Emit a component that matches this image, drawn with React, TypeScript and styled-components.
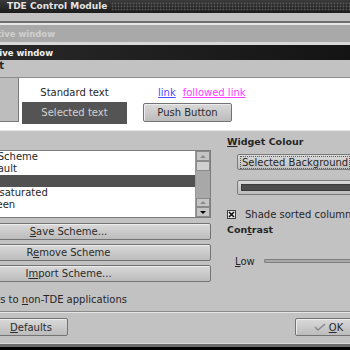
import React from 'react';
import styled, { createGlobalStyle } from 'styled-components';

const GlobalStyle = createGlobalStyle`
  html, body { margin: 0; padding: 0; background: #000; }
  body {
    font-family: 'DejaVu Sans', 'Liberation Sans', sans-serif;
    font-size: 10px;
    color: #262626;
  }
`;

const Screen = styled.div`
  width: 350px;
  height: 350px;
  overflow: hidden;
  background: #c2c2c2;
  display: flex;
  flex-direction: column;
`;

const TitleBar = styled.div`
  height: 13px;
  flex: none;
  display: flex;
  align-items: center;
  background: linear-gradient(#3a3a3a, #1c1c1c);
`;

const TitleText = styled.span`
  padding-left: 7px;
  color: #e4e4e4;
  font-weight: bold;
  font-size: 9px;
  line-height: 13px;
  white-space: nowrap;
`;

const TitleDots = styled.div`
  flex: 1;
  align-self: stretch;
  margin: 2px 0 2px 4px;
  background-image: radial-gradient(circle, #5c5c5c 0.8px, transparent 1.1px);
  background-size: 3px 3px;
`;

const DecoPreview = styled.div`
  margin-top: 8px;
  border-top: 2px solid #6f6f6f;
`;

const WinBar = styled.div<{ $active?: boolean }>`
  height: ${(p) => (p.$active ? 15 : 17)}px;
  border-top: ${(p) => (p.$active ? '3px solid #d8d8d8' : '2px solid #e6e6e6')};
  background: ${(p) => (p.$active ? 'linear-gradient(90deg, #282828, #141414)' : '#a9a9a9')};
  color: ${(p) => (p.$active ? '#f2f2f2' : '#d0d0d0')};
  font-weight: bold;
  font-size: 8.5px;
  display: flex;
  align-items: center;
`;

// box whose right edge sits where the visible text ends; overflow runs off to the left
const EndAt = styled.div<{ $end: number }>`
  width: ${(p) => p.$end}px;
  flex: none;
  display: flex;
  justify-content: flex-end;
  white-space: nowrap;
`;

const TabRow = styled.div`
  height: 17px;
  display: flex;
  align-items: flex-start;
  font-weight: bold;
  line-height: 12px;
`;

const PreviewBox = styled.div`
  height: 52px;
  display: flex;
  border-top: 1px solid #8c8c8c;
  border-bottom: 1px solid #e6e6e6;
  background: #fff;
`;

const FrameStub = styled.div`
  width: 18px;
  height: 43px;
  flex: none;
  background: #bdbdbd;
  border-right: 1px solid #7a7a7a;
  border-bottom: 1px solid #7a7a7a;
`;

const Canvas = styled.div`
  flex: 1;
  display: flex;
  gap: 16px;
  padding: 9px 0 0 3px;
`;

const SampleCol = styled.div<{ $width: number }>`
  width: ${(p) => p.$width}px;
  display: flex;
  flex-direction: column;
  align-items: center;
`;

const SampleLine = styled.div<{ $indent?: number }>`
  height: 12px;
  line-height: 12px;
  align-self: ${(p) => (p.$indent !== undefined ? 'flex-start' : 'center')};
  padding-left: ${(p) => p.$indent ?? 0}px;
  white-space: nowrap;
  display: flex;
  gap: 7px;
`;

const SelectedSample = styled.div`
  margin-top: 3px;
  width: 105px;
  height: 22px;
  line-height: 22px;
  text-align: center;
  background: #545454;
  color: #d2d2d2;
`;

const Link = styled.span<{ $visited?: boolean }>`
  color: ${(p) => (p.$visited ? '#ff3cff' : '#4a4aff')};
  text-decoration: underline;
`;

const Button = styled.button<{ $width?: number; $height?: number }>`
  font: inherit;
  color: #2a2a2a;
  width: ${(p) => (p.$width ? `${p.$width}px` : 'auto')};
  height: ${(p) => p.$height ?? 17}px;
  padding: 0;
  flex: none;
  box-sizing: border-box;
  border: 1px solid #737373;
  border-radius: 2px;
  background: linear-gradient(#d9d9d9, #bcbcbc);
  box-shadow: inset 1px 1px 0 #ececec;
  display: flex;
  align-items: center;
  justify-content: center;
  gap: 3px;
  white-space: nowrap;
`;

const PushButton = styled(Button)`
  margin-top: 4px;
  align-self: flex-start;
`;

const Columns = styled.div`
  display: flex;
  gap: 16px;
  margin-top: 5px;
  margin-left: -74px;
`;

const LeftCol = styled.div`
  width: 285px;
  flex: none;
  padding-top: 14px;
  display: flex;
  flex-direction: column;
  gap: 4px;
`;

const SchemeList = styled.div`
  height: 68px;
  margin-bottom: 1px;
  box-sizing: border-box;
  display: flex;
  border: 1px solid #7c7c7c;
  background: #fff;
`;

const ListItems = styled.div`
  flex: 1;
  overflow: hidden;
`;

const ListItem = styled.div<{ $selected?: boolean }>`
  height: 12px;
  line-height: 12px;
  padding-left: 30px;
  white-space: nowrap;
  background: ${(p) => (p.$selected ? '#515151' : 'transparent')};
  color: ${(p) => (p.$selected ? '#fff' : '#262626')};
`;

const ScrollBar = styled.div`
  width: 14px;
  flex: none;
  display: flex;
  flex-direction: column;
  border-left: 1px solid #9a9a9a;
  background: #a8a8a8;
`;

const ScrollPart = styled.div<{ $h: number; $light?: boolean }>`
  height: ${(p) => p.$h}px;
  flex: none;
  box-sizing: border-box;
  border: 1px solid #8a8a8a;
  background: ${(p) => (p.$light ? '#d0d0d0' : '#c4c4c4')};
  display: flex;
  align-items: center;
  justify-content: center;
`;

const ScrollTrack = styled.div`
  flex: 1;
`;

const Arrow = styled.span<{ $down?: boolean; $color: string }>`
  width: 0;
  height: 0;
  border-left: 3px solid transparent;
  border-right: 3px solid transparent;
  ${(p) =>
    p.$down ? `border-top: 3px solid ${p.$color};` : `border-bottom: 3px solid ${p.$color};`}
`;

const RightCol = styled.div`
  flex: 1;
  display: flex;
  flex-direction: column;
`;

const GroupLabel = styled.div<{ $top?: number }>`
  margin-top: ${(p) => p.$top ?? 0}px;
  height: 12px;
  line-height: 12px;
  font-weight: bold;
  font-size: 9.5px;
  white-space: nowrap;
`;

const Combo = styled.div`
  margin: 6px 0 0 10px;
  width: 160px;
  height: 16px;
  box-sizing: border-box;
  border: 1px solid #7a7a7a;
  border-radius: 2px;
  background: linear-gradient(#dadada, #c0c0c0);
  display: flex;
  align-items: center;
  padding-left: 3px;
`;

const FocusText = styled.span`
  outline: 1px dotted #5a5a5a;
  padding: 0 1px;
  line-height: 11px;
  white-space: nowrap;
`;

const ColourButton = styled.div`
  margin: 10px 0 0 10px;
  width: 160px;
  height: 15px;
  box-sizing: border-box;
  border: 1px solid #7a7a7a;
  border-radius: 2px;
  background: linear-gradient(#d9d9d9, #bdbdbd);
  padding: 3px 3px;
`;

const Swatch = styled.div`
  height: 100%;
  background: #4c4c4c;
  border: 1px solid #3a3a3a;
  box-sizing: border-box;
`;

const CheckRow = styled.div`
  margin-top: 13px;
  height: 12px;
  display: flex;
  align-items: center;
  gap: 9px;
  white-space: nowrap;
`;

const CheckBox = styled.div`
  width: 9px;
  height: 9px;
  flex: none;
  box-sizing: border-box;
  border: 1px solid #3c3c3c;
  background: #e8e8e8;
  display: flex;
  align-items: center;
  justify-content: center;
`;

const SliderRow = styled.div`
  margin-top: 19px;
  padding-left: 8px;
  height: 12px;
  display: flex;
  align-items: center;
  gap: 9px;
`;

const Groove = styled.div`
  flex: 1;
  height: 4px;
  box-sizing: border-box;
  border: 1px solid #7e7e7e;
  border-right: none;
  border-radius: 2px 0 0 2px;
  background: #a9a9a9;
`;

const FooterNote = styled.div`
  margin-top: 12px;
  height: 12px;
  line-height: 12px;
  display: flex;
`;

const Separator = styled.div`
  margin-top: 5px;
  border-top: 1px solid #8a8a8a;
  border-bottom: 1px solid #e6e6e6;
`;

const ButtonRow = styled.div`
  margin-top: 5px;
  display: flex;
  justify-content: space-between;
`;

const DefaultsButton = styled(Button)`
  margin-left: -6px;
`;

const OkButton = styled(Button)`
  margin-right: -16px;
  padding-right: 4px;
`;

const BottomEdge = styled.div`
  margin-top: auto;
  height: 7px;
  flex: none;
  box-sizing: border-box;
  border-top: 1px solid #dadada;
  background: linear-gradient(#6a6a6a 0 3px, #000 3px);
`;

const schemes = ['Current Scheme', 'TDE Default', 'Aqua', 'Aqua Desaturated', 'Atlas Green'];

const App = () => {
  return (
    <Screen>
      <GlobalStyle />
      <TitleBar>
        <TitleText>TDE Control Module</TitleText>
        <TitleDots />
      </TitleBar>

      <DecoPreview>
        <WinBar>
          <EndAt $end={55}>Inactive window</EndAt>
        </WinBar>
        <WinBar $active>
          <EndAt $end={53}>Active window</EndAt>
        </WinBar>
        <TabRow>
          <EndAt $end={4}>Text</EndAt>
        </TabRow>
        <PreviewBox>
          <FrameStub />
          <Canvas>
            <SampleCol $width={105}>
              <SampleLine>Standard text</SampleLine>
              <SelectedSample>Selected text</SelectedSample>
            </SampleCol>
            <SampleCol $width={110}>
              <SampleLine $indent={15}>
                <Link>link</Link>
                <Link $visited>followed link</Link>
              </SampleLine>
              <PushButton $width={89} $height={19}>Push Button</PushButton>
            </SampleCol>
          </Canvas>
        </PreviewBox>
      </DecoPreview>

      <Columns>
        <LeftCol>
          <SchemeList>
            <ListItems>
              {schemes.map((s, i) => (
                <ListItem key={s} $selected={i === 2}>
                  {s}
                </ListItem>
              ))}
            </ListItems>
            <ScrollBar>
              <ScrollPart $h={10}>
                <Arrow $color="#8c8c8c" />
              </ScrollPart>
              <ScrollPart $h={10} $light />
              <ScrollTrack />
              <ScrollPart $h={9}>
                <Arrow $color="#8c8c8c" />
              </ScrollPart>
              <ScrollPart $h={10}>
                <Arrow $down $color="#000" />
              </ScrollPart>
            </ScrollBar>
          </SchemeList>
          <Button>
            <span>
              <u>S</u>ave Scheme...
            </span>
          </Button>
          <Button>
            <span>
              R<u>e</u>move Scheme
            </span>
          </Button>
          <Button>
            <span>
              I<u>m</u>port Scheme...
            </span>
          </Button>
        </LeftCol>

        <RightCol>
          <GroupLabel>
            <u>W</u>idget Colour
          </GroupLabel>
          <Combo>
            <FocusText>Selected Background</FocusText>
          </Combo>
          <ColourButton>
            <Swatch />
          </ColourButton>
          <CheckRow>
            <CheckBox>
              <svg width="7" height="7" viewBox="0 0 7 7">
                <path d="M1 1L6 6M6 1L1 6" stroke="#111" strokeWidth="1.6" />
              </svg>
            </CheckBox>
            <span>Shade sorted column</span>
          </CheckRow>
          <GroupLabel $top={4}>
            Con<u>t</u>rast
          </GroupLabel>
          <SliderRow>
            <span>
              <u>L</u>ow
            </span>
            <Groove />
          </SliderRow>
        </RightCol>
      </Columns>

      <FooterNote>
        <EndAt $end={127}>
          <span>
            Apply colors to <u>n</u>on-TDE applications
          </span>
        </EndAt>
      </FooterNote>
      <Separator />
      <ButtonRow>
        <DefaultsButton $width={74} $height={18}>
          <span>
            <u>D</u>efaults
          </span>
        </DefaultsButton>
        <OkButton $width={71} $height={18}>
          <svg width="12" height="8" viewBox="0 0 12 8">
            <path d="M1 4L4 7L11 1" fill="none" stroke="#8a8a8a" strokeWidth="1.5" />
          </svg>
          <span>
            <u>O</u>K
          </span>
        </OkButton>
      </ButtonRow>
      <BottomEdge />
    </Screen>
  );
};

export default App;
